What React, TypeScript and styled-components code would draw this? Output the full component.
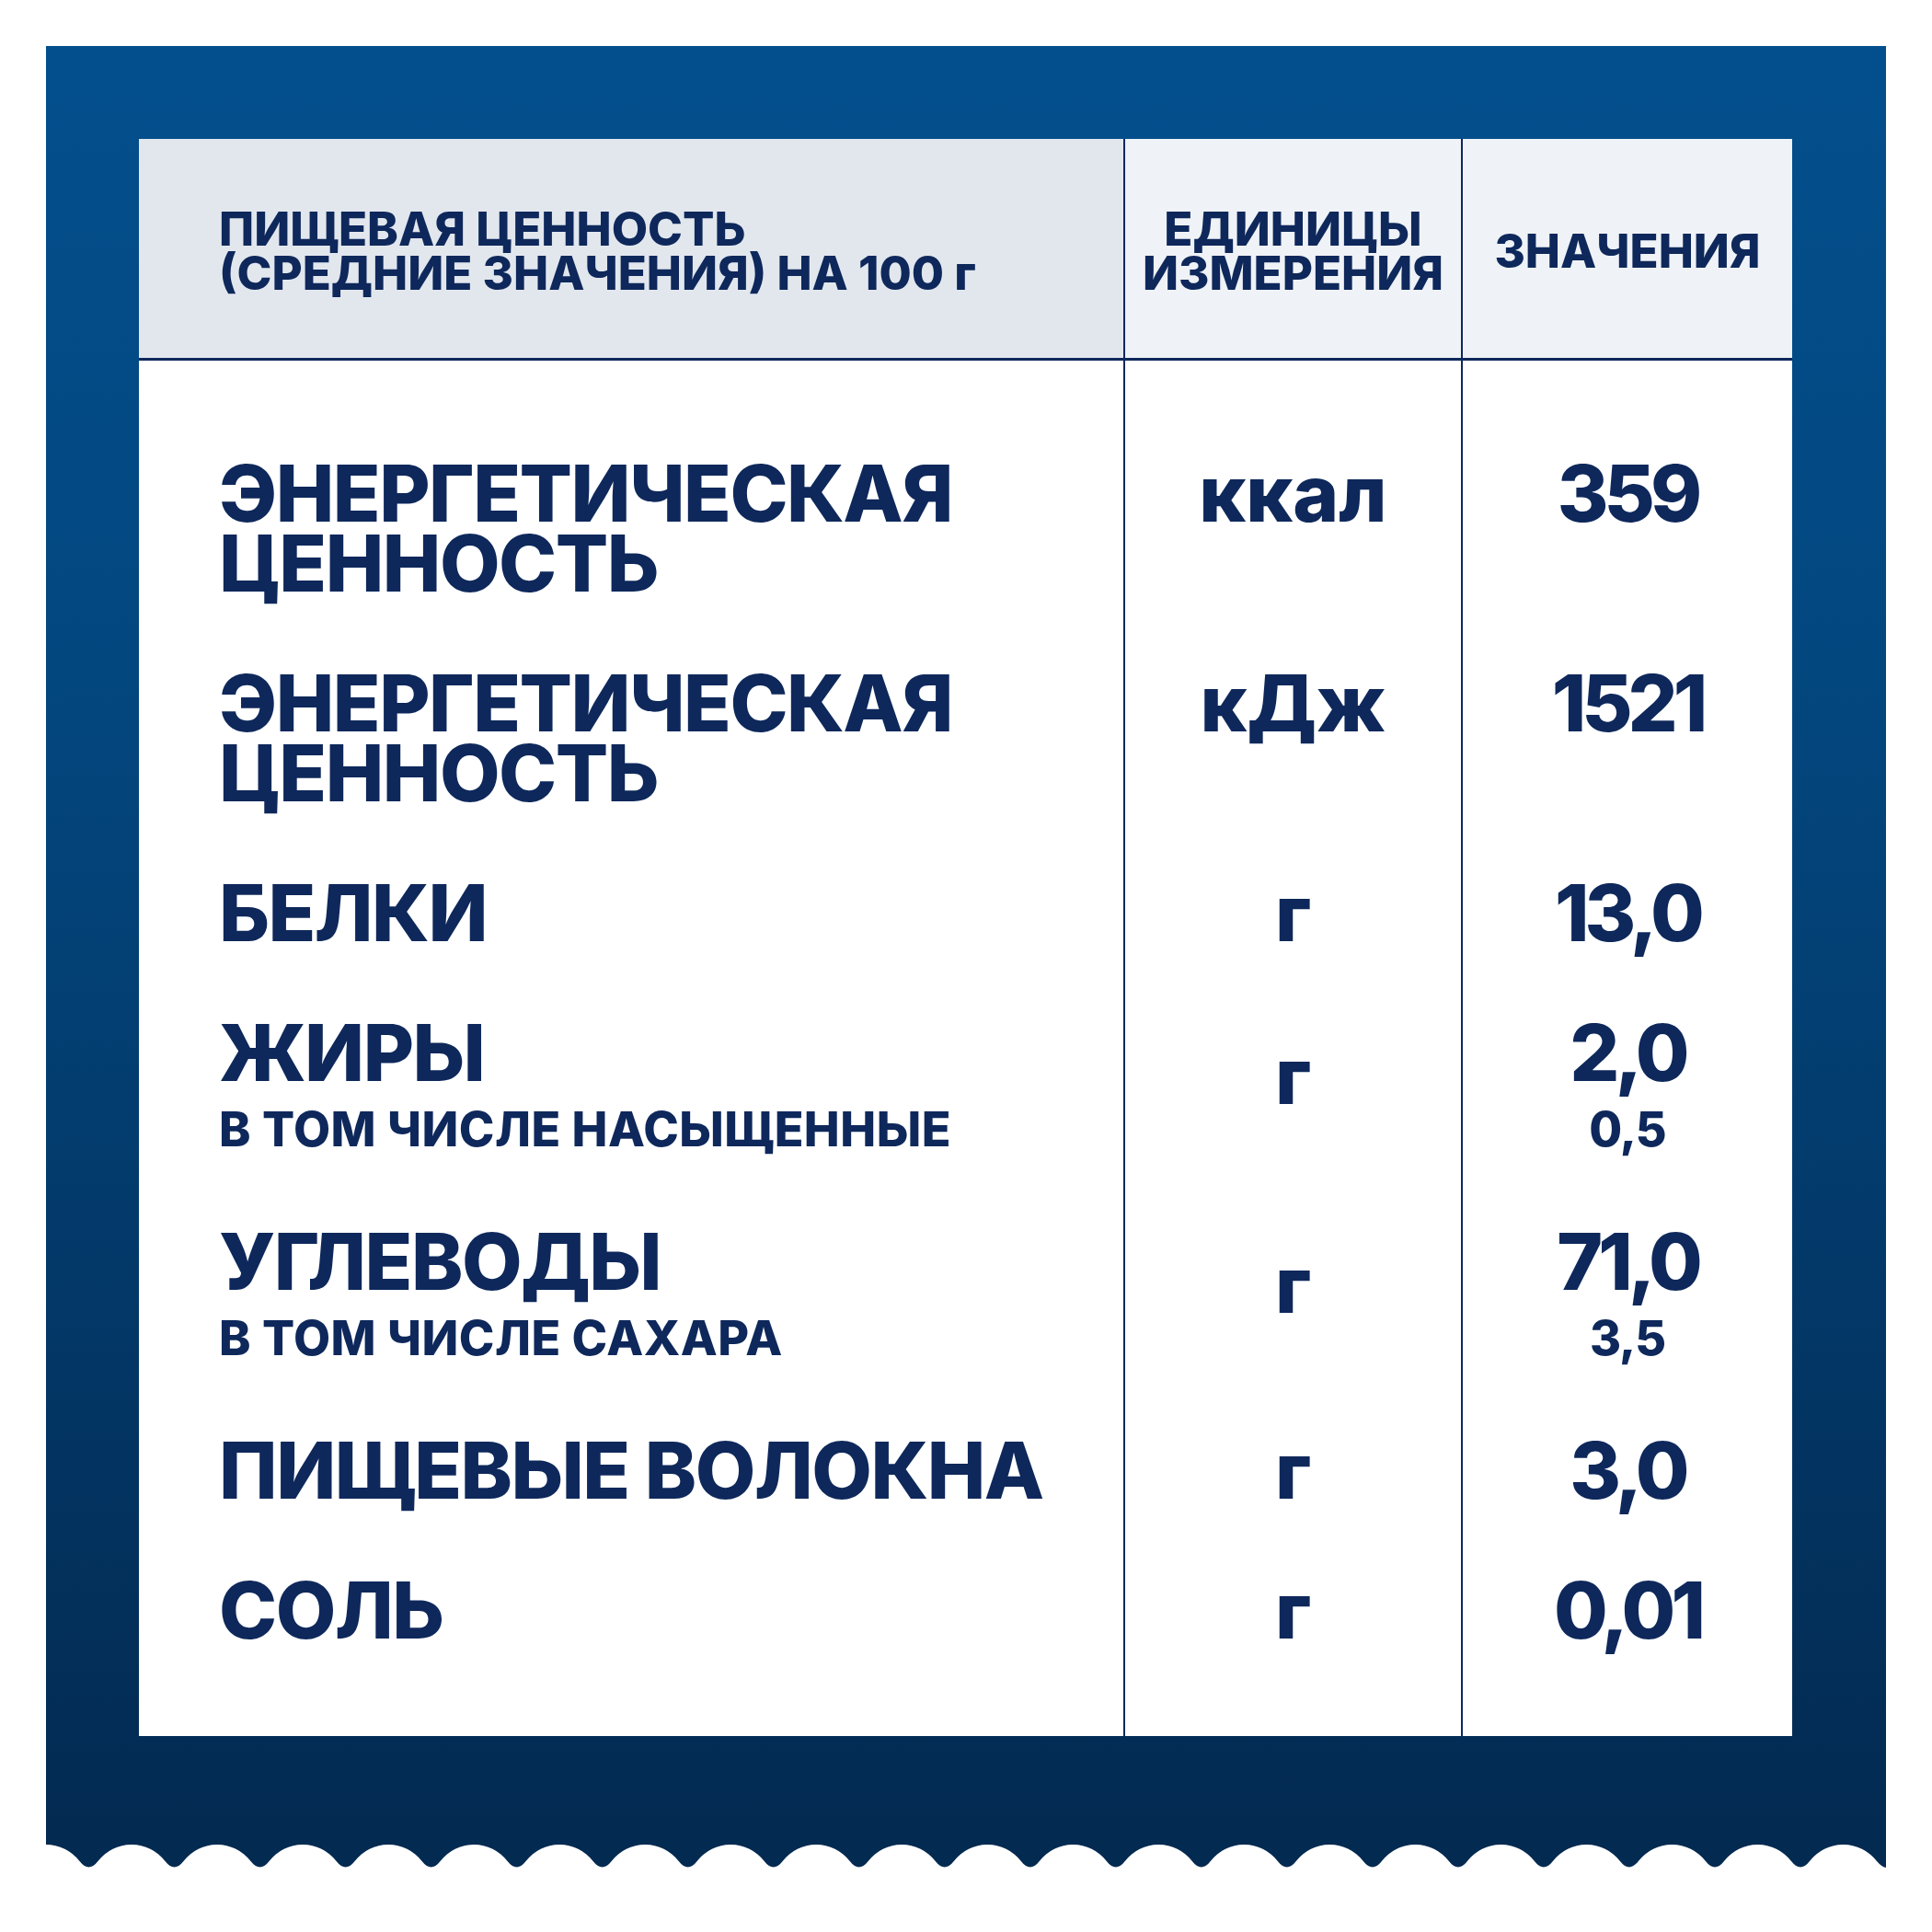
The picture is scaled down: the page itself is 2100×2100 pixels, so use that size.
import React from 'react';
import styled, { createGlobalStyle } from 'styled-components';

const navy = '#0e285b';

const GlobalStyle = createGlobalStyle`
  body {
    margin: 0;
    background: #ffffff;
  }
`;

const Page = styled.div`
  padding: 50px;
  width: 2000px;
  font-family: 'Inter', 'Roboto', 'Liberation Sans', sans-serif;
  font-weight: 800;
  color: ${navy};
`;

const Panel = styled.div`
  padding: 101px 102px 118px 101px;
  background: linear-gradient(180deg, #034f8d 0%, #03477f 35%, #033a6b 65%, #032a51 100%);
`;

const Scallop = styled.svg`
  display: block;
  width: 2000px;
  height: 25px;
`;

const Table = styled.div`
  display: grid;
  grid-template-columns: 1070px 367px 360px;
  width: 1797px;
  background: #ffffff;
`;

const HeaderCell = styled.div<{ $tone: 'dark' | 'light'; $center?: boolean; $divider?: boolean }>`
  height: 241px;
  box-sizing: border-box;
  display: flex;
  flex-direction: column;
  justify-content: center;
  align-items: ${(p) => (p.$center ? 'center' : 'flex-start')};
  padding-left: ${(p) => (p.$center ? '0' : '87px')};
  padding-top: 6px;
  background: ${(p) => (p.$tone === 'dark' ? '#e2e7ee' : '#eff2f6')};
  border-bottom: 3px solid ${navy};
  border-left: ${(p) => (p.$divider ? `2px solid ${navy}` : 'none')};
  font-size: 51px;
  line-height: 48px;
  text-align: ${(p) => (p.$center ? 'center' : 'left')};
  white-space: nowrap;
`;

const Cell = styled.div<{ $col: 1 | 2 | 3; $first?: boolean; $last?: boolean }>`
  display: flex;
  flex-direction: column;
  align-items: ${(p) => (p.$col === 1 ? 'flex-start' : 'center')};
  padding-top: ${(p) => (p.$first ? 107 : 38)}px;
  padding-bottom: ${(p) => (p.$last ? 98 : 38)}px;
  padding-left: ${(p) => (p.$col === 1 ? '87px' : '0')};
  border-left: ${(p) => (p.$col === 1 ? 'none' : `2px solid ${navy}`)};
`;

const MainLine = styled.div<{ $tight?: number }>`
  font-size: 85px;
  line-height: 76px;
  letter-spacing: ${(p) => p.$tight ?? -1.5}px;
  white-space: nowrap;
`;

const UnitLine = styled(MainLine)<{ $shift?: number }>`
  padding-top: ${(p) => p.$shift ?? 0}px;
  letter-spacing: 0;
`;

const SubLine = styled.div<{ $tight?: number }>`
  font-size: 52px;
  line-height: 60px;
  padding-top: 15px;
  letter-spacing: ${(p) => p.$tight ?? 0.5}px;
  white-space: nowrap;
`;

type Row = {
  title: string[];
  sub?: string;
  unit: string;
  value: string;
  subValue?: string;
};

const rows: Row[] = [
  { title: ['ЭНЕРГЕТИЧЕСКАЯ', 'ЦЕННОСТЬ'], unit: 'ккал', value: '359' },
  { title: ['ЭНЕРГЕТИЧЕСКАЯ', 'ЦЕННОСТЬ'], unit: 'кДж', value: '1521' },
  { title: ['БЕЛКИ'], unit: 'г', value: '13,0' },
  { title: ['ЖИРЫ'], sub: 'В ТОМ ЧИСЛЕ НАСЫЩЕННЫЕ', unit: 'г', value: '2,0', subValue: '0,5' },
  { title: ['УГЛЕВОДЫ'], sub: 'В ТОМ ЧИСЛЕ САХАРА', unit: 'г', value: '71,0', subValue: '3,5' },
  { title: ['ПИЩЕВЫЕ ВОЛОКНА'], unit: 'г', value: '3,0' },
  { title: ['СОЛЬ'], unit: 'г', value: '0,01' },
];

// scalloped bottom edge: white bumps cut into the blue
const scallopPath = () => {
  const p = 2000 / 21.5;
  const r = 46;
  const a = 36.5;
  let d = 'M0 0 ';
  d += `A${r} ${r} 0 0 1 ${a} 18 `;
  for (let k = 1; k <= 21; k++) {
    const xc = p * k;
    d += `Q${(xc - p / 2).toFixed(1)} 31 ${(xc - a).toFixed(1)} 18 `;
    d += `A${r} ${r} 0 0 1 ${(xc + a).toFixed(1)} 18 `;
  }
  d += `Q${(2000 - 4).toFixed(1)} 25 2000 25 V0 Z`;
  return d;
};

export default function App() {
  return (
    <Page>
      <GlobalStyle />
      <Panel>
        <Table>
          <HeaderCell $tone="dark">
            <span>ПИЩЕВАЯ ЦЕННОСТЬ</span>
            <span>(СРЕДНИЕ ЗНАЧЕНИЯ) НА 100 г</span>
          </HeaderCell>
          <HeaderCell $tone="light" $center $divider>
            <span>ЕДИНИЦЫ</span>
            <span>ИЗМЕРЕНИЯ</span>
          </HeaderCell>
          <HeaderCell $tone="light" $center $divider>
            <span>ЗНАЧЕНИЯ</span>
          </HeaderCell>

          {rows.map((row, i) => {
            const first = i === 0;
            const last = i === rows.length - 1;
            return (
              <React.Fragment key={i}>
                <Cell $col={1} $first={first} $last={last}>
                  {row.title.map((t) => (
                    <MainLine key={t}>{t}</MainLine>
                  ))}
                  {row.sub && <SubLine>{row.sub}</SubLine>}
                </Cell>
                <Cell $col={2} $first={first} $last={last}>
                  <UnitLine $shift={row.sub ? 25 : 0}>{row.unit}</UnitLine>
                </Cell>
                <Cell $col={3} $first={first} $last={last}>
                  <MainLine $tight={-5}>{row.value}</MainLine>
                  {row.subValue && <SubLine $tight={-1}>{row.subValue}</SubLine>}
                </Cell>
              </React.Fragment>
            );
          })}
        </Table>
      </Panel>
      <Scallop viewBox="0 0 2000 25" preserveAspectRatio="none">
        <path d={scallopPath()} fill="#032a51" />
      </Scallop>
    </Page>
  );
}
